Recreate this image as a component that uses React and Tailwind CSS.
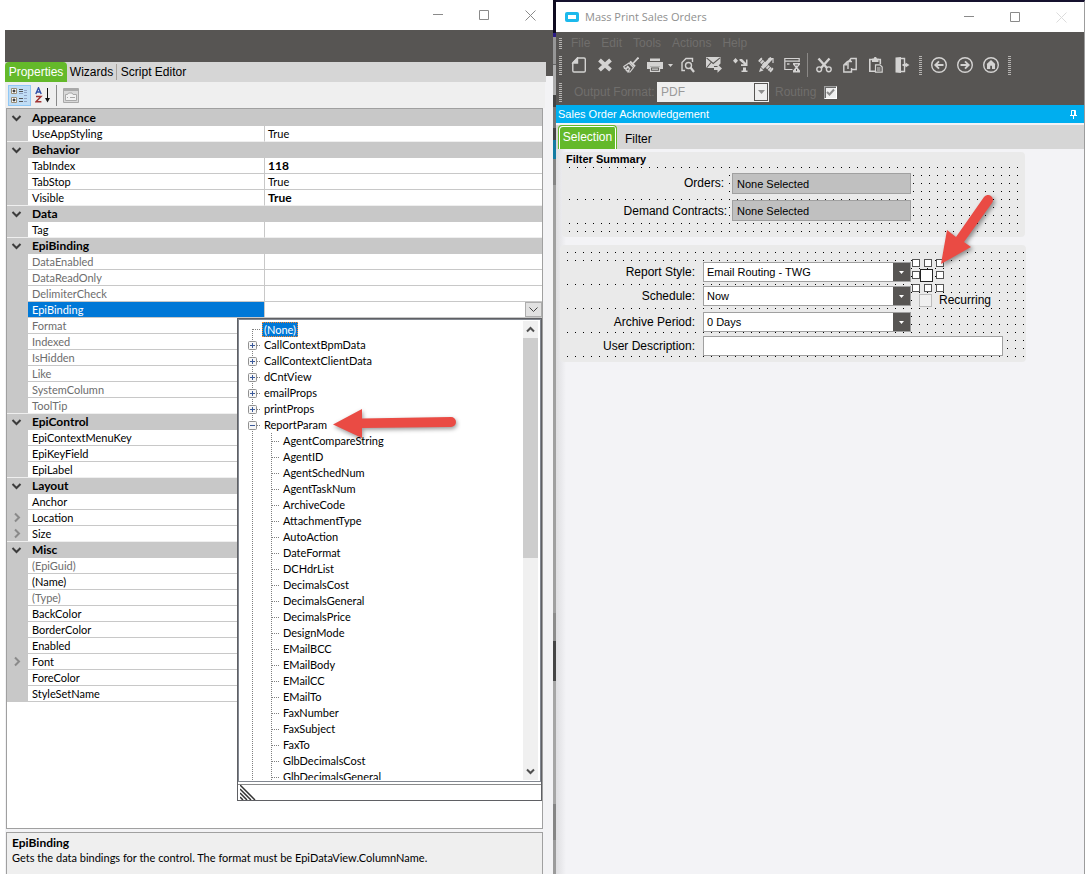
import React, { useState } from "react";

const groups = [
  { name: "Appearance", items: [{ name: "UseAppStyling", value: "True" }] },
  {
    name: "Behavior",
    items: [
      { name: "TabIndex", value: "118", changed: true },
      { name: "TabStop", value: "True" },
      { name: "Visible", value: "True", changed: true },
    ],
  },
  { name: "Data", items: [{ name: "Tag" }] },
  {
    name: "EpiBinding",
    items: [
      { name: "DataEnabled", readOnly: true },
      { name: "DataReadOnly", readOnly: true },
      { name: "DelimiterCheck", readOnly: true },
      { name: "EpiBinding", selected: true },
      { name: "Format", readOnly: true },
      { name: "Indexed", readOnly: true },
      { name: "IsHidden", readOnly: true },
      { name: "Like", readOnly: true },
      { name: "SystemColumn", readOnly: true },
      { name: "ToolTip", readOnly: true },
    ],
  },
  {
    name: "EpiControl",
    items: [{ name: "EpiContextMenuKey" }, { name: "EpiKeyField" }, { name: "EpiLabel" }],
  },
  {
    name: "Layout",
    items: [
      { name: "Anchor" },
      { name: "Location", expandable: true },
      { name: "Size", expandable: true },
    ],
  },
  {
    name: "Misc",
    items: [
      { name: "(EpiGuid)", readOnly: true },
      { name: "(Name)" },
      { name: "(Type)", readOnly: true },
      { name: "BackColor" },
      { name: "BorderColor" },
      { name: "Enabled" },
      { name: "Font", expandable: true },
      { name: "ForeColor" },
      { name: "StyleSetName" },
    ],
  },
];

const views = ["CallContextBpmData", "CallContextClientData", "dCntView", "emailProps", "printProps"];

const reportParams = [
  "AgentCompareString",
  "AgentID",
  "AgentSchedNum",
  "AgentTaskNum",
  "ArchiveCode",
  "AttachmentType",
  "AutoAction",
  "DateFormat",
  "DCHdrList",
  "DecimalsCost",
  "DecimalsGeneral",
  "DecimalsPrice",
  "DesignMode",
  "EMailBCC",
  "EMailBody",
  "EMailCC",
  "EMailTo",
  "FaxNumber",
  "FaxSubject",
  "FaxTo",
  "GlbDecimalsCost",
  "GlbDecimalsGeneral",
];

const WindowButtons = ({ closeColor }) => (
  <div className="flex shrink-0 self-stretch text-[#8a8a8a]">
    <button aria-label="Minimize" className="w-[46px] flex items-center justify-center">
      <svg width="11" height="11" stroke="currentColor" fill="none">
        <path d="M0 4.5H10" />
      </svg>
    </button>
    <button aria-label="Maximize" className="w-[46px] flex items-center justify-center">
      <svg width="11" height="11" stroke="currentColor" fill="none">
        <path d="M.5 .5H9.5V9.5H.5Z" />
      </svg>
    </button>
    <button aria-label="Close" className={`w-[46px] flex items-center justify-center ${closeColor}`}>
      <svg width="11" height="11" stroke="currentColor" fill="none">
        <path d="M.5 .5L10.5 10.5M10.5 .5L.5 10.5" />
      </svg>
    </button>
  </div>
);

const Chevron = ({ open }) => (
  <svg width="11" height="11" fill="none" strokeWidth="2" className="block ml-1">
    {open ? (
      <path d="M1.5 3L5.5 7L9.5 3" stroke="#3c3c3c" />
    ) : (
      <path d="M4 1.5L8 5.5L4 9.5" stroke="#8a8a8a" />
    )}
  </svg>
);

const PropertyGrid = ({ selected, onSelect }) => (
  <table className="w-full table-fixed border-separate border-spacing-0 border-t border-[#c8c8c8] text-left">
    <colgroup>
      <col className="w-[21px]" />
      <col className="w-[237px]" />
      <col />
    </colgroup>
    {groups.map((group, g) => (
      <tbody key={group.name}>
        <tr className="bg-[#c8c8c8]">
          <td className="h-4 p-0">
            <Chevron open />
          </td>
          <th colSpan={2} className="h-4 py-0 pl-1 font-bold text-xs leading-4">
            {group.name}
          </th>
        </tr>
        {group.items.map((item, i) => {
          const last = i === group.items.length - 1 && g < groups.length - 1;
          const line = last ? "border-[#efefef]" : "border-[#c8c8c8]";
          const active = item.name === selected;
          return (
            <tr key={item.name} onClick={() => onSelect(item.name)}>
              <td className={`h-4 p-0 bg-[#c8c8c8] border-b ${line}`}>
                {item.expandable ? <Chevron /> : null}
              </td>
              <td
                className={`h-4 py-0 pl-1 leading-[15px] border-b border-r border-r-[#c8c8c8] ${
                  last ? "border-b-[#efefef]" : "border-b-[#c8c8c8]"
                } ${active ? "bg-[#0078d7] text-white" : item.readOnly ? "text-[#6d6d6d]" : ""}`}
              >
                {item.name}
              </td>
              <td
                className={`h-4 p-0 pl-[3px] leading-[15px] border-b ${line} ${
                  item.changed ? "font-bold text-xs leading-[15px]" : ""
                }`}
              >
                {active ? (
                  <button
                    aria-label="Open list"
                    className="ml-auto flex h-[15px] w-[17px] items-center justify-center border border-[#adadad] bg-[#e1e1e1]"
                  >
                    <svg width="9" height="6" fill="none" stroke="#444">
                      <path d="M.5 .5L4.5 4.5L8.5 .5" />
                    </svg>
                  </button>
                ) : (
                  item.value
                )}
              </td>
            </tr>
          );
        })}
      </tbody>
    ))}
  </table>
);

const TreeLines = ({ box, first }) => (
  <svg width="23" height="16" className="shrink-0" fill="none" stroke="#808080">
    <path d={first ? "M13.5 8V16" : "M13.5 0V16"} strokeDasharray="1 1" />
    <path d="M14 8.5H22" strokeDasharray="1 1" />
    {box ? (
      <>
        <rect x="9.5" y="4.5" width="8" height="8" rx="1" fill="#f6f6f6" stroke="#919191" />
        <path d={box === "plus" ? "M11 8.5H16M13.5 6V11" : "M11 8.5H16"} stroke="#3b5a9a" />
      </>
    ) : null}
  </svg>
);

const ChildLines = () => (
  <svg width="42" height="16" className="shrink-0" fill="none" stroke="#808080" strokeDasharray="1 1">
    <path d="M13.5 0V16M32.5 0V16M33 8.5H41" />
  </svg>
);

const BindingTree = () => (
  <div className="absolute left-[230px] right-0 top-[209px] border border-[#5f6064] bg-white">
    <div className="flex h-[463px] border border-[#828790] py-px pr-0.5">
      <ul className="flex-1 overflow-hidden leading-4 whitespace-nowrap">
        <li className="flex h-4 items-center">
          <TreeLines first />
          <span className="h-[15px] border border-dotted border-[#ff8728] bg-[#0078d7] px-px leading-[13px] text-white">
            (None)
          </span>
        </li>
        {views.map((view) => (
          <li key={view} className="flex h-4">
            <TreeLines box="plus" />
            <span className="px-0.5">{view}</span>
          </li>
        ))}
        <li>
          <div className="flex h-4">
            <TreeLines box="minus" />
            <span className="px-0.5">ReportParam</span>
          </div>
          <ul>
            {reportParams.map((param) => (
              <li key={param} className="flex h-4">
                <ChildLines />
                <span className="px-0.5">{param}</span>
              </li>
            ))}
          </ul>
        </li>
      </ul>
      <div className="flex w-[15px] flex-col bg-[#f0f0f0]">
        <button aria-label="Scroll up" className="flex h-[17px] items-center justify-center">
          <svg width="9" height="7" fill="none" stroke="#505050" strokeWidth="2">
            <path d="M1 5.5L4.5 2L8 5.5" />
          </svg>
        </button>
        <div className="h-[220px] bg-[#cdcdcd]" />
        <button aria-label="Scroll down" className="mt-auto flex h-[17px] items-center justify-center">
          <svg width="9" height="7" fill="none" stroke="#505050" strokeWidth="2">
            <path d="M1 1.5L4.5 5L8 1.5" />
          </svg>
        </button>
      </div>
    </div>
    <div className="mt-0.5 h-4 border-t border-[#8a8a8a]">
      <svg width="18" height="15" className="ml-0.5" stroke="#333" fill="none">
        <path d="M0 0L15 15M0 4L11 15M0 8L7 15M0 12L3 15" strokeWidth="1.5" />
      </svg>
    </div>
  </div>
);

const PropertiesWindow = () => {
  const [selected, setSelected] = useState("EpiBinding");
  return (
    <section className="relative flex min-w-0 flex-col bg-[#f3f3f5] font-['Lato','Liberation_Sans',sans-serif] text-[11px]">
      <div className="flex h-[30px] justify-end bg-white">
        <WindowButtons closeColor="text-[#8a8a8a]" />
      </div>
      <div className="flex flex-1 flex-col border-l-[5px] border-white">
        <div className="h-8 bg-[#575553]" />
        <div className="flex h-5 items-start font-['Liberation_Sans',sans-serif]">
          <div className="flex h-5 flex-1 items-center bg-[#d6d6d6] text-xs">
            <button className="h-5 w-[62px] rounded-t-sm bg-[#64b92a] text-white">Properties</button>
            <button className="w-[49px]">Wizards</button>
            <button className="w-[74px] border-l border-[#a8a29c]">Script Editor</button>
          </div>
          <div className="h-3.5 w-[7px] bg-[#575553]" />
        </div>
        <div className="mr-2 flex h-[26px] items-center bg-[#efefef] pl-[3px]">
          <button
            aria-label="Categorized"
            className="flex h-[21px] w-[23px] items-center justify-center border border-[#90c8f6] bg-[#c0ddf5]"
          >
            <svg width="17" height="16" fill="none">
              <path d="M.5 1.5H5.5V6.5H.5ZM.5 10.5H5.5V15.5H.5Z" fill="#fff" stroke="#9a8f78" />
              <path d="M1.5 4H4.5M3 2.5V5.5M1.5 13H4.5M3 11.5V14.5" stroke="#000" />
              <path d="M8 2.5H12M8 4.5H12M8 11.5H12M8 14.5H12" stroke="#555" />
              <path d="M13 3.5H16M13 5.5H16M13 8.5H16M13 11.5H16M13 14.5H16M8 6.5H12" stroke="#8fa3c4" />
            </svg>
          </button>
          <button aria-label="Alphabetical" className="ml-1 flex h-[21px] w-4 items-center justify-center">
            <svg width="16" height="16" fill="none">
              <path d="M.8 7L3.5 .8L6.2 7M1.8 5H5.2" stroke="#2f4fa8" strokeWidth="1.4" />
              <path d="M1 9.5H6L1 14.8H6.4" stroke="#a03232" strokeWidth="1.5" />
              <path d="M12.5 1V14" stroke="#111" />
              <path d="M10 11H15L12.5 15.5Z" fill="#111" />
            </svg>
          </button>
          <div className="ml-[5px] h-[21px] w-px bg-[#8a8a8a]" />
          <button disabled aria-label="Property pages" className="ml-1.5 flex h-[21px] w-4 items-center justify-center">
            <svg width="16" height="15" fill="none" stroke="#a9a9a9">
              <path d="M.5 .5H15.5V14.5H.5Z" fill="#d8d8d8" />
              <path d="M1 2H15" strokeWidth="2" />
              <path d="M2.5 6.5H4.5L5.5 5H9L10 6.5H13.5V12.5H2.5Z" fill="#f2f2f2" />
              <path d="M4 9.5H5M7 9.5H12" />
            </svg>
          </button>
        </div>
        <div className="relative ml-px mr-2.5 flex-1 border border-[#a0a0a0] bg-white">
          <PropertyGrid selected={selected} onSelect={setSelected} />
          <BindingTree />
        </div>
        <div className="ml-px mr-2.5 mt-[3px] h-[42px] border border-b-0 border-[#a0a0a0] bg-[#efefef] px-[5px] pt-0.5 leading-[15px]">
          <h2 className="text-xs font-bold leading-[15px]">EpiBinding</h2>
          <p>Gets the data bindings for the control. The format must be EpiDataView.ColumnName.</p>
        </div>
      </div>
      <svg width="130" height="40" className="absolute left-[331px] top-[404px]">
        <path
          d="M2 20.5L31 5V14.5L120 13A5 5 0 0 1 120 23L31 24V34Z"
          fill="#ea4b44"
          className="drop-shadow-[1px_2px_2px_rgba(0,0,0,0.4)]"
        />
      </svg>
    </section>
  );
};

// sliver of the windows that sit behind, seen between the two
const Backdrop = () => (
  <div className="flex flex-col bg-[#9b9b9b]">
    <div className="h-[33px] bg-[#0e0b20]" />
    <div className="h-1 bg-[#2c1c86]" />
    <div className="h-[27px] bg-[#969696]" />
    <div className="h-[31px] border-t border-[#666] bg-[#adadad]" />
    <div className="h-[45px] border-y-[12px] border-[#444] bg-[#777]" />
    <div className="h-[19px] bg-[#137ba2]" />
    <div className="h-[26px] bg-[#858585]" />
    <div className="h-[428px] bg-[#a0a0a0]" />
    <div className="h-7 bg-[#8c8c8c]" />
    <div className="h-10 bg-[#454545]" />
    <div className="h-[123px] bg-[#a6a6a6]" />
    <div className="h-9 bg-[#858585]" />
  </div>
);

const Grip = ({ className }) => (
  <svg width="3" className={`shrink-0 ${className}`} stroke="#b5b3b1" fill="none">
    <path d="M1.5 0V40" strokeWidth="3" strokeDasharray="1 1" />
  </svg>
);

const Tool = ({ label, width, children }) => (
  <button
    aria-label={label}
    className={`flex h-[22px] shrink-0 items-center justify-center text-[#d4d3d2] ${width || "w-[26px]"}`}
  >
    {children}
  </button>
);

const Icon = ({ children }) => (
  <svg width="16" height="16" viewBox="0 0 16 16" fill="none" stroke="currentColor" strokeWidth="1.4">
    {children}
  </svg>
);

const ToolBar = () => (
  <div className="flex h-[22px] items-center">
    <Grip className="mr-1 h-[19px]" />
    <Tool label="New">
      <Icon>
        <path d="M6.5 1H13Q14.3 1 14.3 2.3V13.7Q14.3 15 13 15H3Q1.8 15 1.8 13.7V5.7Z" />
        <path d="M2 6H6.5V1Z" fill="currentColor" />
      </Icon>
    </Tool>
    <Tool label="Delete">
      <Icon>
        <path d="M2.5 3L13.5 13M13.5 3L2.5 13" strokeWidth="4" />
      </Icon>
    </Tool>
    <Tool label="Clear">
      <Icon>
        <path d="M15.5 .5L10 6.5" strokeWidth="1.8" />
        <path d="M7 4.5L12 9.5" strokeWidth="2.2" />
        <path d="M6 6L10.5 10.5L7 15H5L6.5 12.5L4 14L2.8 12.8L4.5 10.5L1.5 11.5L.8 9.5Z" strokeWidth="1.2" />
        <path d="M4 9L7 12" />
      </Icon>
    </Tool>
    <Tool label="Print" width="w-[22px]">
      <Icon>
        <path d="M3 1.5H13V4H3ZM0 5H16V12H13V9.5H3V12H0Z" fill="currentColor" stroke="none" />
        <path d="M3.5 10H12.5V14.3H3.5ZM5 12.2H11" strokeWidth="1.2" />
      </Icon>
    </Tool>
    <Tool label="Print options" width="w-[9px]">
      <svg width="5" height="3" fill="currentColor">
        <path d="M0 0H5L2.5 3Z" />
      </svg>
    </Tool>
    <Tool label="Print preview">
      <Icon>
        <path d="M5 13.5H2V5.5L6 1.5H12.5V5" />
        <circle cx="8.5" cy="8.5" r="3" />
        <path d="M10.5 10.5L14 15" strokeWidth="2.2" />
      </Icon>
    </Tool>
    <Tool label="Send mail">
      <Icon>
        <path d="M0 0H14.5V6.5L12 9H8V11H0Z" fill="currentColor" stroke="none" />
        <path d="M.5 .8L7.2 6.5L14 .8M.5 11L5 5.5" stroke="#575553" strokeWidth="1.1" />
        <path d="M8 10H11.5V7.2L16 11.5L11.5 15.8V13H8Z" fill="currentColor" stroke="none" />
      </Icon>
    </Tool>
    <Tool label="Workflow">
      <Icon>
        <path
          d="M3.5 1L6 3.7L3.5 6.5L1 3.7ZM7.5 2L10 2L14 6V2.5H15.5V9H9V7.2H12L7.5 3.5ZM9.5 15V13.5H11V10.5H14V13.5H15.5V15Z"
          fill="currentColor"
          stroke="none"
        />
      </Icon>
    </Tool>
    <Tool label="Design tools">
      <Icon>
        <path d="M1.5 2.5L14 14" strokeWidth="4" strokeDasharray="2 .6" />
        <path d="M13.5 1L4 11" strokeWidth="3.4" />
        <path d="M1 15L2.5 10.5L5.5 13.5Z" fill="currentColor" stroke="none" />
        <path d="M10.5 1.5H15V6M4 .8L1 3.8M15 11L12 14.5" strokeWidth="1.2" />
      </Icon>
    </Tool>
    <Tool label="Schedule">
      <Icon>
        <path d="M8.5 12.5H.8V1.5H15.2V5M.8 4.2H15.2" strokeWidth="1.2" />
        <path d="M3 7H5.5" />
        <path d="M9 6H16V7.5L13.5 10.5L16 13.5V15.5H9V13.5L11.5 10.5L9 7.5Z" fill="currentColor" stroke="none" />
        <path d="M11 8H14M12.5 12V14" stroke="#575553" strokeWidth="1" />
      </Icon>
    </Tool>
    <div className="mr-[3px] ml-0.5 h-6 w-px bg-[#8b8987]" />
    <Tool label="Cut">
      <Icon>
        <path d="M2.5 1.5L11 11M13.5 1.5L5 11" strokeWidth="2.4" />
        <circle cx="3.2" cy="12.3" r="2.4" />
        <circle cx="12.8" cy="12.3" r="2.4" />
      </Icon>
    </Tool>
    <Tool label="Copy">
      <Icon>
        <path d="M6 12V5L9 1.5H14.2V12.5H10" />
        <path d="M10 4.5H5.5L1.8 8V15H9.5V11" />
        <path d="M2 8.5H5.5V4.8ZM6 5H9V1.7Z" fill="currentColor" stroke="none" />
      </Icon>
    </Tool>
    <Tool label="Paste">
      <Icon>
        <path d="M7 14.2H1.8V2.5H4M10 2.5H12.3V7" strokeWidth="1.6" />
        <path d="M4 1.5H5.5L6.5 0H8L9 1.5H10.5V5H4Z" fill="currentColor" stroke="none" />
        <path d="M7.5 7.8H12L14.2 10V15.2H7.5ZM9 11H12.5M9 13H12.5" strokeWidth="1.2" />
      </Icon>
    </Tool>
    <Tool label="Exit">
      <Icon>
        <path d="M1.5 .5L7 0V16L1.5 15.5Z" fill="currentColor" stroke="none" />
        <path d="M7 1.5H10.5V14.5H7" />
        <path d="M8.5 8H12" strokeWidth="2" />
        <path d="M11.5 5.5L15.5 8L11.5 10.5Z" fill="currentColor" stroke="none" />
      </Icon>
    </Tool>
    <Grip className="mx-1 h-[19px]" />
    <Tool label="Back">
      <Icon>
        <circle cx="8" cy="8" r="7.3" />
        <path d="M4.5 8H12.5M8 4.3L4.3 8L8 11.7" strokeWidth="1.9" />
      </Icon>
    </Tool>
    <Tool label="Forward">
      <Icon>
        <circle cx="8" cy="8" r="7.3" />
        <path d="M3.5 8H11.5M8 4.3L11.7 8L8 11.7" strokeWidth="1.9" />
      </Icon>
    </Tool>
    <Tool label="Home">
      <Icon>
        <circle cx="8" cy="8" r="7.3" />
        <path d="M8 3L12.5 7.2H12V12H9V8.8H7.2V12H4V7.2H3.5Z" fill="currentColor" stroke="none" />
      </Icon>
    </Tool>
    <Grip className="ml-1 h-[19px]" />
  </div>
);

// designer snap grid, one dot every 8px
const DotGrid = ({ id, className }) => (
  <svg width="100%" height="100%" className={`absolute ${className}`}>
    <pattern id={id} width="8" height="8" patternUnits="userSpaceOnUse">
      <rect width="1" height="1" fill="#000" />
    </pattern>
    <rect width="100%" height="100%" fill={`url(#${id})`} />
  </svg>
);

const Combo = ({ id, value }) => (
  <div className="relative h-5 w-[208px]">
    <select
      id={id}
      defaultValue={value}
      className="block h-5 w-full appearance-none border border-[#a0a0a0] bg-white pl-[3px] text-[11px]"
    >
      <option>{value}</option>
    </select>
    <span className="pointer-events-none absolute right-px top-px flex h-[18px] w-[17px] items-center justify-center bg-[#575553]">
      <svg width="5" height="3" fill="#fff">
        <path d="M0 0H5L2.5 3Z" />
      </svg>
    </span>
  </div>
);

const FieldLabel = ({ htmlFor, className, children }) => (
  <label htmlFor={htmlFor} className={`self-stretch bg-[#eaeaea] text-right ${className}`}>
    {children}
  </label>
);

const Handle = ({ className }) => (
  <span className={`absolute size-2 border border-[#555] bg-white ${className}`} />
);

const FilterSummary = () => (
  <fieldset className="relative ml-1.5 w-[463px] overflow-hidden rounded-sm bg-[#eaeaea] pb-3.5 pl-1.5">
    <DotGrid id="dots-summary" className="left-[7px] top-[15px]" />
    <div className="relative">
      <h2 className="-ml-0.5 h-4 text-[11px] font-bold leading-[15px]">Filter Summary</h2>
      <div className="flex h-[31px] items-center">
        <FieldLabel htmlFor="orders" className="w-40 pr-1 leading-[31px]">
          Orders:
        </FieldLabel>
        <input
          id="orders"
          readOnly
          defaultValue="None Selected"
          className="ml-1 h-[21px] w-[179px] border border-[#a0a0a0] bg-[#c0c0c0] pl-1 text-[11px]"
        />
      </div>
      <div className="mt-px flex h-[23px] items-start">
        <FieldLabel htmlFor="contracts" className="w-40 pr-px leading-[22px]">
          Demand Contracts:
        </FieldLabel>
        <input
          id="contracts"
          readOnly
          defaultValue="None Selected"
          className="ml-1 h-[21px] w-[179px] border border-[#a0a0a0] bg-[#c0c0c0] pl-1 text-[11px]"
        />
      </div>
    </div>
  </fieldset>
);

const ReportOptions = () => (
  <fieldset className="relative ml-1 mt-2 w-[466px] rounded-sm bg-[#eaeaea] pb-1.5 pl-1.5 pt-4">
    <div className="absolute inset-0 overflow-hidden">
      <DotGrid id="dots-options" className="left-[7px] top-[7px]" />
    </div>
    <div className="relative flex flex-col gap-px">
      <div className="flex h-[23px] items-start">
        <FieldLabel htmlFor="style" className="w-[130px] pr-px leading-[23px]">
          Report Style:
        </FieldLabel>
        <div className="ml-[7px] mt-px">
          <Combo id="style" value="Email Routing - TWG" />
        </div>
        <div className="relative ml-[9px] mt-2 size-[13px]">
          <input
            type="checkbox"
            aria-label="New check box"
            className="block size-[13px] appearance-none border border-[#222] bg-white"
          />
          <Handle className="-left-2 -top-2.5" />
          <Handle className="left-1 -top-2.5" />
          <Handle className="left-4 -top-2.5" />
          <Handle className="-left-2 top-0.5" />
          <Handle className="left-4 top-0.5" />
          <Handle className="-left-2 top-[15px]" />
          <Handle className="left-1 top-[15px]" />
          <Handle className="left-4 top-[15px]" />
        </div>
      </div>
      <div className="flex h-[23px] items-start">
        <FieldLabel htmlFor="schedule" className="w-[130px] pr-px leading-[23px]">
          Schedule:
        </FieldLabel>
        <div className="ml-[7px] mt-px">
          <Combo id="schedule" value="Now" />
        </div>
        <label className="ml-1.5 mt-2 flex h-[15px] items-center bg-[#eaeaea] px-0.5 leading-[15px]">
          <input
            type="checkbox"
            className="mr-[7px] block size-[13px] appearance-none border border-[#bcbcbc] bg-[#f0f0f0]"
          />
          Recurring
        </label>
      </div>
      <div className="flex h-[23px] items-start">
        <FieldLabel htmlFor="archive" className="w-[130px] pr-px leading-[27px]">
          Archive Period:
        </FieldLabel>
        <div className="ml-[7px] mt-[3px]">
          <Combo id="archive" value="0 Days" />
        </div>
      </div>
      <div className="flex h-[23px] items-start">
        <FieldLabel htmlFor="description" className="w-[130px] pr-px leading-[27px]">
          User Description:
        </FieldLabel>
        <input
          id="description"
          className="ml-[7px] mt-[3px] h-5 w-[300px] border border-[#a0a0a0] bg-white px-1 text-[11px]"
        />
      </div>
    </div>
  </fieldset>
);

const OrdersWindow = () => (
  <section className="relative flex min-w-0 flex-col border-r border-t-2 border-r-[#9c9c9c] border-t-[#15112e] bg-[#f3f3f6] font-['Liberation_Sans',sans-serif] text-xs">
    <div className="flex h-[30px] items-center bg-white">
      <svg width="14" height="10" className="ml-[9px] mr-1.5">
        <rect width="14" height="10" rx="2" fill="#1cb9ec" />
        <path d="M3 3H11V7H3Z" fill="#fff" />
      </svg>
      <h1 className="flex-1 font-['Open_Sans',sans-serif] text-[11px] text-[#8f8f8f]">Mass Print Sales Orders</h1>
      <WindowButtons closeColor="text-[#dcdcdc]" />
    </div>
    <div className="bg-[#575553] pl-[3px] text-[#706e6c]">
      <div className="flex h-[22px] items-center">
        <Grip className="mr-[9px] h-[11px]" />
        <nav className="flex gap-[11px]">
          <button>File</button>
          <button>Edit</button>
          <button>Tools</button>
          <button>Actions</button>
          <button>Help</button>
        </nav>
      </div>
      <ToolBar />
      <div className="flex h-[29px] items-center pt-[3px]">
        <Grip className="mr-3 h-[19px]" />
        <label htmlFor="format" className="w-[83px] whitespace-nowrap">
          Output Format:
        </label>
        <div className="relative h-5 w-28">
          <select
            id="format"
            defaultValue="PDF"
            className="block h-5 w-full appearance-none bg-[#efefef] pl-1 text-[#9a9a9a]"
          >
            <option>PDF</option>
          </select>
          <span className="pointer-events-none absolute right-px top-px flex h-[18px] w-3.5 items-center justify-center border border-[#575553] bg-[#efefef]">
            <svg width="7" height="4" fill="#8f8f8f">
              <path d="M0 0H7L3.5 4Z" />
            </svg>
          </span>
        </div>
        <label htmlFor="routing" className="ml-1.5 w-[49px]">
          Routing
        </label>
        <span className="relative">
          <input
            id="routing"
            type="checkbox"
            defaultChecked
            className="peer block size-[13px] appearance-none border border-[#fff] border-l-[#a0a0a0] border-t-[#a0a0a0] bg-[#efefef] shadow-[inset_1px_1px_0_#696969]"
          />
          <svg
            width="13"
            height="13"
            fill="none"
            stroke="#8a8a8a"
            strokeWidth="2"
            className="pointer-events-none invisible absolute left-0 top-0 peer-checked:visible"
          >
            <path d="M3 6L5.5 8.5L10 3.5" />
          </svg>
        </span>
      </div>
    </div>
    <div className="flex h-[18px] items-center justify-between bg-[#00aeef] pl-0.5 pr-[7px] text-[11px] text-white">
      <h2>Sales Order Acknowledgement</h2>
      <button aria-label="Pin">
        <svg width="7" height="9" fill="none" stroke="#fff">
          <path d="M1.5 5V.5H5.5V5M4.5 .5V5M0 5.5H7M3.5 6V9" />
        </svg>
      </button>
    </div>
    <div className="mt-0.5 flex h-6 bg-[#d6d6d6] pl-0.5">
      <button className="w-[59px] rounded-t-sm border border-b-0 border-[#64b92a] bg-[#64b92a] pb-0.5 text-white shadow-[inset_1px_1px_0_#fff,inset_-1px_0_0_#fff]">
        Selection
      </button>
      <button className="ml-2 pt-1">Filter</button>
    </div>
    <div className="flex-1 bg-[linear-gradient(to_right,#dedee1,#f3f3f6_10px)] pt-[3px]">
      <FilterSummary />
      <ReportOptions />
    </div>
    <svg width="70" height="85" className="absolute left-[378px] top-[186px]">
      <path
        d="M7 76L13 42L22 49L50 9A5 5 0 0 1 58 15L30 54L37 59Z"
        fill="#ea4b44"
        className="drop-shadow-[2px_2px_2px_rgba(0,0,0,0.4)]"
      />
    </svg>
  </section>
);

export default function App() {
  return (
    <main className="grid h-screen min-h-[860px] grid-cols-[553fr_3px_529fr] overflow-hidden bg-white pb-1 text-black">
      <PropertiesWindow />
      <Backdrop />
      <OrdersWindow />
    </main>
  );
}
